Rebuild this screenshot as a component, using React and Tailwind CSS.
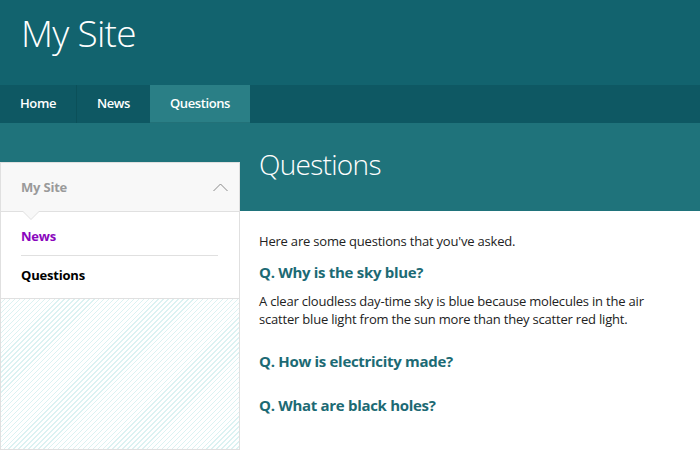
import React from "react";

const Chevron = () => (
  <svg width="15" height="9" viewBox="0 0 15 9" className="text-[#8a8a8a]">
    <path d="M0.5 8 L7.5 1 L14.5 8" fill="none" stroke="currentColor" strokeWidth="1" />
  </svg>
);

const questions = [
  {
    q: "Q. Why is the sky blue?",
    a: "A clear cloudless day-time sky is blue because molecules in the air scatter blue light from the sun more than they scatter red light.",
  },
  { q: "Q. How is electricity made?" },
  { q: "Q. What are black holes?" },
];

export default function App() {
  return (
    <div className="h-[450px] w-[700px] overflow-hidden flex flex-col bg-white font-['Open_Sans',sans-serif]">
      {/* site header */}
      <div className="h-[85px] bg-[#12636e] px-[21px] pt-[9px]">
        <h1 className="text-[37px] font-light text-white leading-[48px] tracking-[-0.7px]">My Site</h1>
      </div>

      {/* top nav */}
      <div className="h-[38px] bg-[#0e5863] flex text-[13px] font-semibold text-white tracking-[-0.4px]">
        <a className="w-[77px] flex items-center justify-center border-r border-[#0b5059]">Home</a>
        <a className="w-[73px] flex items-center justify-center">News</a>
        <a className="w-[100px] flex items-center justify-center bg-[#2a7f86] border-b border-[#227178]">Questions</a>
      </div>

      <div className="flex flex-1">
        {/* left column */}
        <div className="w-[240px] flex flex-col">
          <div className="h-[39px] bg-[#1f737b]"></div>
          <div className="flex-1 flex flex-col border border-[#e0e0e0]">
            <div className="relative h-[49px] bg-[#f8f8f8] border-b border-[#e0e0e0] flex items-center justify-between pl-[20px] pr-[11px]">
              <span className="text-[13px] font-bold text-[#9a9a9a] tracking-[-0.2px] mt-[2px]">My Site</span>
              <Chevron />
              <div className="absolute left-[21px] -bottom-[9px] w-0 h-0 border-l-[9px] border-r-[9px] border-t-[9px] border-l-transparent border-r-transparent border-t-[#e0e0e0]"></div>
              <div className="absolute left-[22px] -bottom-[8px] w-0 h-0 border-l-[8px] border-r-[8px] border-t-[8px] border-l-transparent border-r-transparent border-t-[#f8f8f8]"></div>
            </div>
            <div className="bg-white border-b border-[#e0e0e0] px-[20px]">
              <div className="h-[44px] pt-[15px] border-b border-[#e0e0e0] mr-[1px] text-[13px] font-bold text-[#8a06bd] tracking-[-0.2px]">News</div>
              <div className="h-[42px] pt-[10px] text-[13px] font-bold text-black tracking-[-0.2px]">Questions</div>
            </div>
            <div className="flex-1 bg-[repeating-linear-gradient(135deg,#ffffff_0px,#ffffff_2.5px,#dcf2f2_2.5px,#dcf2f2_3.5px)]"></div>
          </div>
        </div>

        {/* main column */}
        <div className="flex-1 flex flex-col">
          <div className="h-[88px] bg-[#1f737b] pl-[19px] pt-[22px]">
            <h2 className="text-[28px] font-light text-white leading-[38px] tracking-[-0.7px]">Questions</h2>
          </div>
          <div className="pl-[19px] pr-[20px] pt-[21px] text-[13px] text-[#222] tracking-[-0.2px]">
            <p className="leading-[18px]">Here are some questions that you've asked.</p>
            {questions.map((item) => (
              <div key={item.q}>
                <h3 className="mt-[11px] text-[15px] font-bold text-[#1c6a74] leading-[22px] tracking-[-0.3px]">{item.q}</h3>
                {item.a && <p className="mt-[9px] mb-[22px] leading-[18px]">{item.a}</p>}
                {!item.a && <div className="h-[11px]"></div>}
              </div>
            ))}
          </div>
        </div>
      </div>
    </div>
  );
}
